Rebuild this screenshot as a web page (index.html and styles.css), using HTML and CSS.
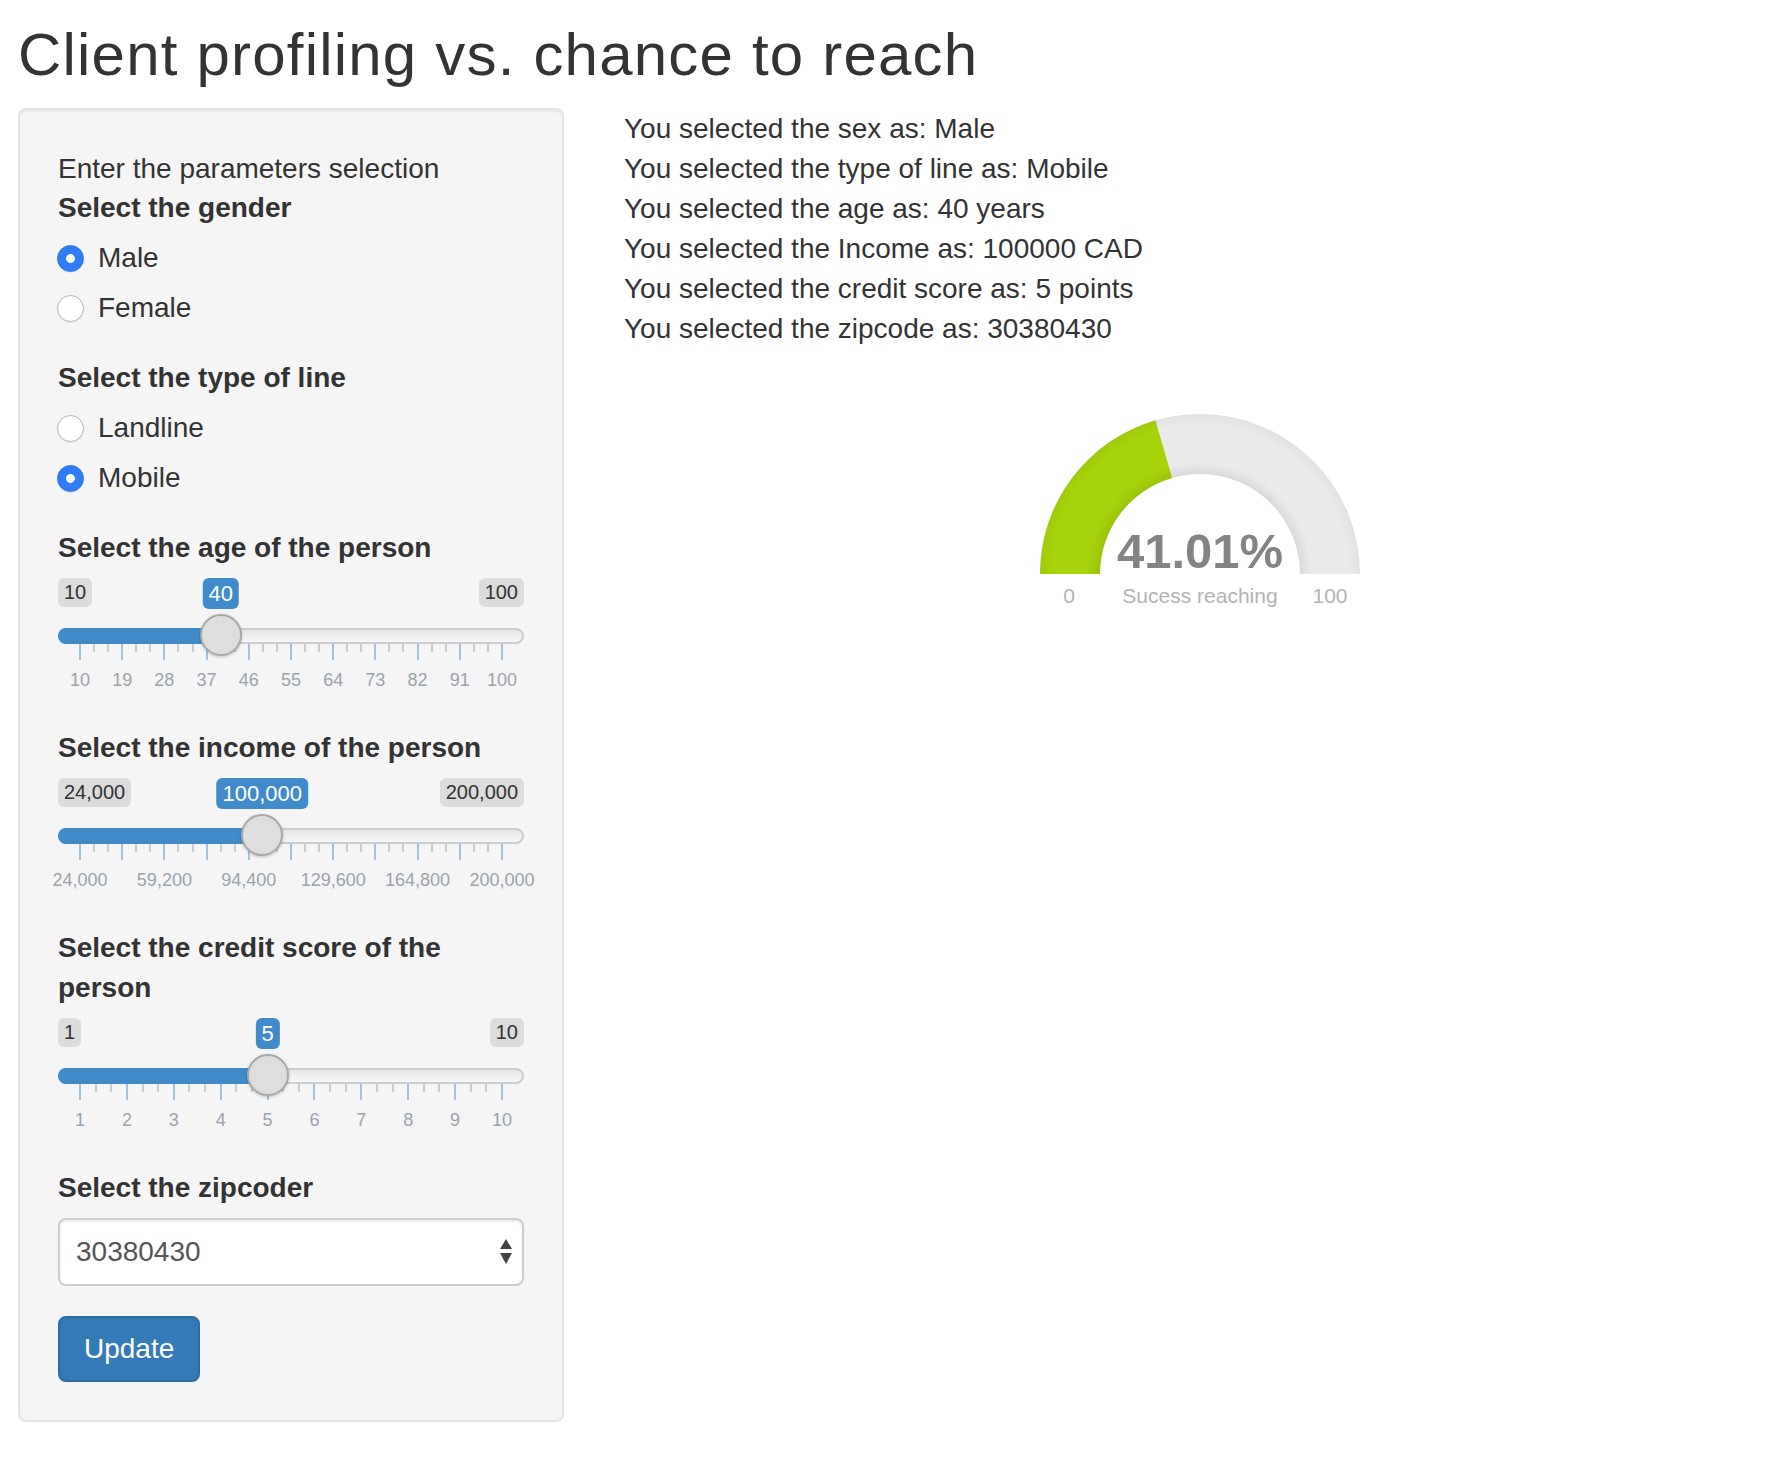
FILE: index.html
```
<!DOCTYPE html>
<html lang="en">
<head>
<meta charset="utf-8">
<title>Client profiling vs. chance to reach</title>
<link rel="stylesheet" href="styles.css">
</head>
<body>
<div class="page">
  <h2 class="title">Client profiling vs. chance to reach</h2>
  <div class="layout">
    <div class="well">
      <div class="intro">Enter the parameters selection</div>

      <div class="group">
        <div class="control-label">Select the gender</div>
        <div class="options">
          <label class="radio"><input type="radio" name="sex" checked><span>Male</span></label>
          <label class="radio"><input type="radio" name="sex"><span>Female</span></label>
        </div>
      </div>

      <div class="group">
        <div class="control-label">Select the type of line</div>
        <div class="options">
          <label class="radio"><input type="radio" name="line"><span>Landline</span></label>
          <label class="radio"><input type="radio" name="line" checked><span>Mobile</span></label>
        </div>
      </div>

      <div class="group">
        <div class="control-label">Select the age of the person</div>
        <div class="slider" style="--x:162.67px">
          <span class="irs-min">10</span>
          <span class="irs-max">100</span>
          <span class="track"></span>
          <span class="bar"></span>
          <div class="ticks">
            <i class="t M"></i><i class="t"></i><i class="t"></i><i class="t M"></i><i class="t"></i><i class="t"></i><i class="t M"></i><i class="t"></i><i class="t"></i><i class="t M"></i><i class="t"></i><i class="t"></i><i class="t M"></i><i class="t"></i><i class="t"></i><i class="t M"></i><i class="t"></i><i class="t"></i><i class="t M"></i><i class="t"></i><i class="t"></i><i class="t M"></i><i class="t"></i><i class="t"></i><i class="t M"></i><i class="t"></i><i class="t"></i><i class="t M"></i><i class="t"></i><i class="t"></i><i class="t M"></i>
          </div>
          <div class="grid-labels g10">
            <span>10</span><span>19</span><span>28</span><span>37</span><span>46</span><span>55</span><span>64</span><span>73</span><span>82</span><span>91</span><span>100</span>
          </div>
          <span class="handle"></span>
          <span class="irs-single">40</span>
        </div>
      </div>

      <div class="group">
        <div class="control-label">Select the income of the person</div>
        <div class="slider" style="--x:204.23px">
          <span class="irs-min">24,000</span>
          <span class="irs-max">200,000</span>
          <span class="track"></span>
          <span class="bar"></span>
          <div class="ticks">
            <i class="t M"></i><i class="t"></i><i class="t"></i><i class="t M"></i><i class="t"></i><i class="t"></i><i class="t M"></i><i class="t"></i><i class="t"></i><i class="t M"></i><i class="t"></i><i class="t"></i><i class="t M"></i><i class="t"></i><i class="t"></i><i class="t M"></i><i class="t"></i><i class="t"></i><i class="t M"></i><i class="t"></i><i class="t"></i><i class="t M"></i><i class="t"></i><i class="t"></i><i class="t M"></i><i class="t"></i><i class="t"></i><i class="t M"></i><i class="t"></i><i class="t"></i><i class="t M"></i>
          </div>
          <div class="grid-labels g10">
            <span>24,000</span><span></span><span>59,200</span><span></span><span>94,400</span><span></span><span>129,600</span><span></span><span>164,800</span><span></span><span>200,000</span>
          </div>
          <span class="handle"></span>
          <span class="irs-single">100,000</span>
        </div>
      </div>

      <div class="group">
        <div class="control-label">Select the credit score of the person</div>
        <div class="slider" style="--x:209.56px">
          <span class="irs-min">1</span>
          <span class="irs-max">10</span>
          <span class="track"></span>
          <span class="bar"></span>
          <div class="ticks">
            <i class="t M"></i><i class="t"></i><i class="t"></i><i class="t M"></i><i class="t"></i><i class="t"></i><i class="t M"></i><i class="t"></i><i class="t"></i><i class="t M"></i><i class="t"></i><i class="t"></i><i class="t M"></i><i class="t"></i><i class="t"></i><i class="t M"></i><i class="t"></i><i class="t"></i><i class="t M"></i><i class="t"></i><i class="t"></i><i class="t M"></i><i class="t"></i><i class="t"></i><i class="t M"></i><i class="t"></i><i class="t"></i><i class="t M"></i>
          </div>
          <div class="grid-labels g9">
            <span>1</span><span>2</span><span>3</span><span>4</span><span>5</span><span>6</span><span>7</span><span>8</span><span>9</span><span>10</span>
          </div>
          <span class="handle"></span>
          <span class="irs-single">5</span>
        </div>
      </div>

      <div class="group">
        <div class="control-label">Select the zipcoder</div>
        <div class="select">
          <span>30380430</span>
          <svg class="select-arrows" width="12" height="26" viewBox="0 0 12 26" aria-hidden="true">
            <path d="M6 0 L12 10 L0 10 Z" fill="#444"/>
            <path d="M0 14 L12 14 L6 25 Z" fill="#444"/>
          </svg>
        </div>
      </div>

      <button class="btn" type="button">Update</button>
    </div>

    <div class="main">
      <div class="out">You selected the sex as: Male</div>
      <div class="out">You selected the type of line as: Mobile</div>
      <div class="out">You selected the age as: 40 years</div>
      <div class="out">You selected the Income as: 100000 CAD</div>
      <div class="out">You selected the credit score as: 5 points</div>
      <div class="out">You selected the zipcode as: 30380430</div>

      <svg class="gauge" width="360" height="210" viewBox="0 0 360 210">
        <defs>
          <radialGradient id="gshade" gradientUnits="userSpaceOnUse" cx="180" cy="170" r="160">
            <stop offset="0.625" stop-color="#000" stop-opacity="0.07"/>
            <stop offset="0.7" stop-color="#000" stop-opacity="0"/>
            <stop offset="0.93" stop-color="#000" stop-opacity="0"/>
            <stop offset="1" stop-color="#000" stop-opacity="0.04"/>
          </radialGradient>
        </defs>
        <path d="M20 170 A160 160 0 0 1 340 170 L280 170 A100 100 0 0 0 80 170 Z" fill="#ebeaeb"/>
        <path d="M20 170 A160 160 0 0 1 135.41 16.34 L152.13 73.96 A100 100 0 0 0 80 170 Z" fill="#a6d30b"/>
        <path d="M20 170 A160 160 0 0 1 340 170 L280 170 A100 100 0 0 0 80 170 Z" fill="url(#gshade)"/>
        <text class="g-value" x="180" y="164" text-anchor="middle">41.01%</text>
        <text class="g-label" x="49" y="199" text-anchor="middle">0</text>
        <text class="g-label" x="180" y="199" text-anchor="middle">Sucess reaching</text>
        <text class="g-label" x="310" y="199" text-anchor="middle">100</text>
      </svg>
    </div>
  </div>
</div>
</body>
</html>
```

FILE: styles.css
```
html, body {
  margin: 0;
  padding: 0;
  background: #fff;
}

body {
  font-family: "Liberation Sans", Arial, Helvetica, sans-serif;
  font-size: 28px;
  line-height: 40px;
  color: #333;
}

.page {
  padding: 0 16px 0 18px;
}

.title {
  margin: 22px 0 20px 0;
  font-size: 60px;
  line-height: 66px;
  font-weight: 400;
  letter-spacing: 1.2px;
  color: #333;
}

.layout {
  display: flex;
  align-items: flex-start;
  gap: 60px;
}

/* sidebar well */
.well {
  box-sizing: border-box;
  width: 546px;
  flex: none;
  padding: 38px;
  background: #f5f5f5;
  border: 2px solid #e3e3e3;
  border-radius: 8px;
  box-shadow: inset 0 2px 2px rgba(0, 0, 0, 0.05);
}

.intro {
  height: 40px;
  margin-top: 1px;
  margin-bottom: -1px;
}

.group + .group {
  margin-top: 30px;
}

.control-label {
  font-weight: 700;
}

.options {
  display: flex;
  flex-direction: column;
  gap: 10px;
  padding-top: 10px;
}

.radio {
  display: flex;
  align-items: center;
  height: 40px;
  cursor: pointer;
}

.radio input {
  -webkit-appearance: none;
  appearance: none;
  box-sizing: border-box;
  flex: none;
  width: 27px;
  height: 27px;
  margin: 0 14px 0 -1px;
  border-radius: 50%;
  border: 1.5px solid #b4b4b4;
  background: #fff;
  box-shadow: 0 1px 1px rgba(0, 0, 0, 0.06);
}

.radio input:checked {
  border-color: #2a72e6;
  background: radial-gradient(circle, #fff 0 4px, #2f7cf6 4.8px);
}

/* range slider */
.slider {
  position: relative;
  height: 120px;
  margin-top: 10px;
}

.irs-min,
.irs-max,
.irs-single {
  position: absolute;
  top: 0;
  padding: 2px 6px;
  border-radius: 6px;
  white-space: nowrap;
}

.irs-min,
.irs-max {
  font-size: 20px;
  line-height: 25px;
  color: #333;
  background: #dcdcdc;
}

.irs-min {
  left: 0;
}

.irs-max {
  right: 0;
}

.irs-single {
  left: var(--x);
  transform: translateX(-50%);
  font-size: 22px;
  line-height: 27px;
  color: #fff;
  background: #428bca;
  z-index: 3;
}

.track {
  position: absolute;
  left: 0;
  right: 0;
  top: 50px;
  height: 16px;
  box-sizing: border-box;
  border: 2px solid #cccccc;
  border-radius: 16px;
  background: linear-gradient(to bottom, #dedede -50%, #fff 150%);
}

.bar {
  position: absolute;
  left: 0;
  top: 50px;
  height: 16px;
  width: var(--x);
  background: #428bca;
  border-radius: 16px 0 0 16px;
}

.handle {
  position: absolute;
  top: 36px;
  left: var(--x);
  width: 42px;
  height: 42px;
  margin-left: -21px;
  box-sizing: border-box;
  border: 2px solid #a9a9a9;
  border-radius: 50%;
  background: #dedede;
  box-shadow: 0 1px 3px rgba(0, 0, 0, 0.22);
  z-index: 2;
}

.ticks {
  position: absolute;
  top: 66px;
  left: 21px;
  width: 424px;
  display: flex;
  justify-content: space-between;
  align-items: flex-start;
}

.t {
  display: block;
  width: 2px;
  height: 8px;
  background: #cbcbcb;
}

.t.M {
  height: 16px;
  background: #9fc3e4;
}

.grid-labels {
  position: absolute;
  top: 91px;
  display: grid;
  font-size: 18px;
  line-height: 22px;
  color: #99a4ac;
}

.grid-labels span {
  display: flex;
  justify-content: center;
  white-space: nowrap;
  min-width: 0;
}

.g10 {
  left: 0.9px;
  width: 464.2px;
  grid-template-columns: repeat(11, minmax(0, 1fr));
}

.g9 {
  left: -1.44px;
  width: 468.9px;
  grid-template-columns: repeat(10, minmax(0, 1fr));
}

/* select */
.select {
  box-sizing: border-box;
  display: flex;
  align-items: center;
  justify-content: space-between;
  height: 68px;
  margin-top: 10px;
  padding: 0 10px 0 16px;
  background: #fff;
  border: 2px solid #cccccc;
  border-radius: 8px;
  box-shadow: inset 0 2px 2px rgba(0, 0, 0, 0.075);
  color: #555;
  font-size: 28px;
}

.select-arrows {
  display: block;
}

/* button */
.btn {
  display: block;
  box-sizing: border-box;
  height: 66px;
  margin-top: 30px;
  padding: 0 24px;
  font-family: "Liberation Sans", Arial, Helvetica, sans-serif;
  font-size: 28px;
  line-height: 40px;
  color: #fff;
  background: #337ab7;
  border: 2px solid #2e6da4;
  border-radius: 8px;
  cursor: pointer;
}

/* main panel */
.main {
  width: 1152px;
  flex: none;
  padding-top: 1px;
}

.out {
  height: 40px;
  white-space: nowrap;
}

.gauge {
  display: block;
  margin: 55px auto 0;
  overflow: visible;
}

.g-value {
  font-family: "Liberation Sans", Arial, sans-serif;
  font-weight: 700;
  font-size: 49px;
  fill: #838383;
}

.g-label {
  font-family: "Liberation Sans", Arial, sans-serif;
  font-size: 21px;
  fill: #b3b3b3;
}
```
